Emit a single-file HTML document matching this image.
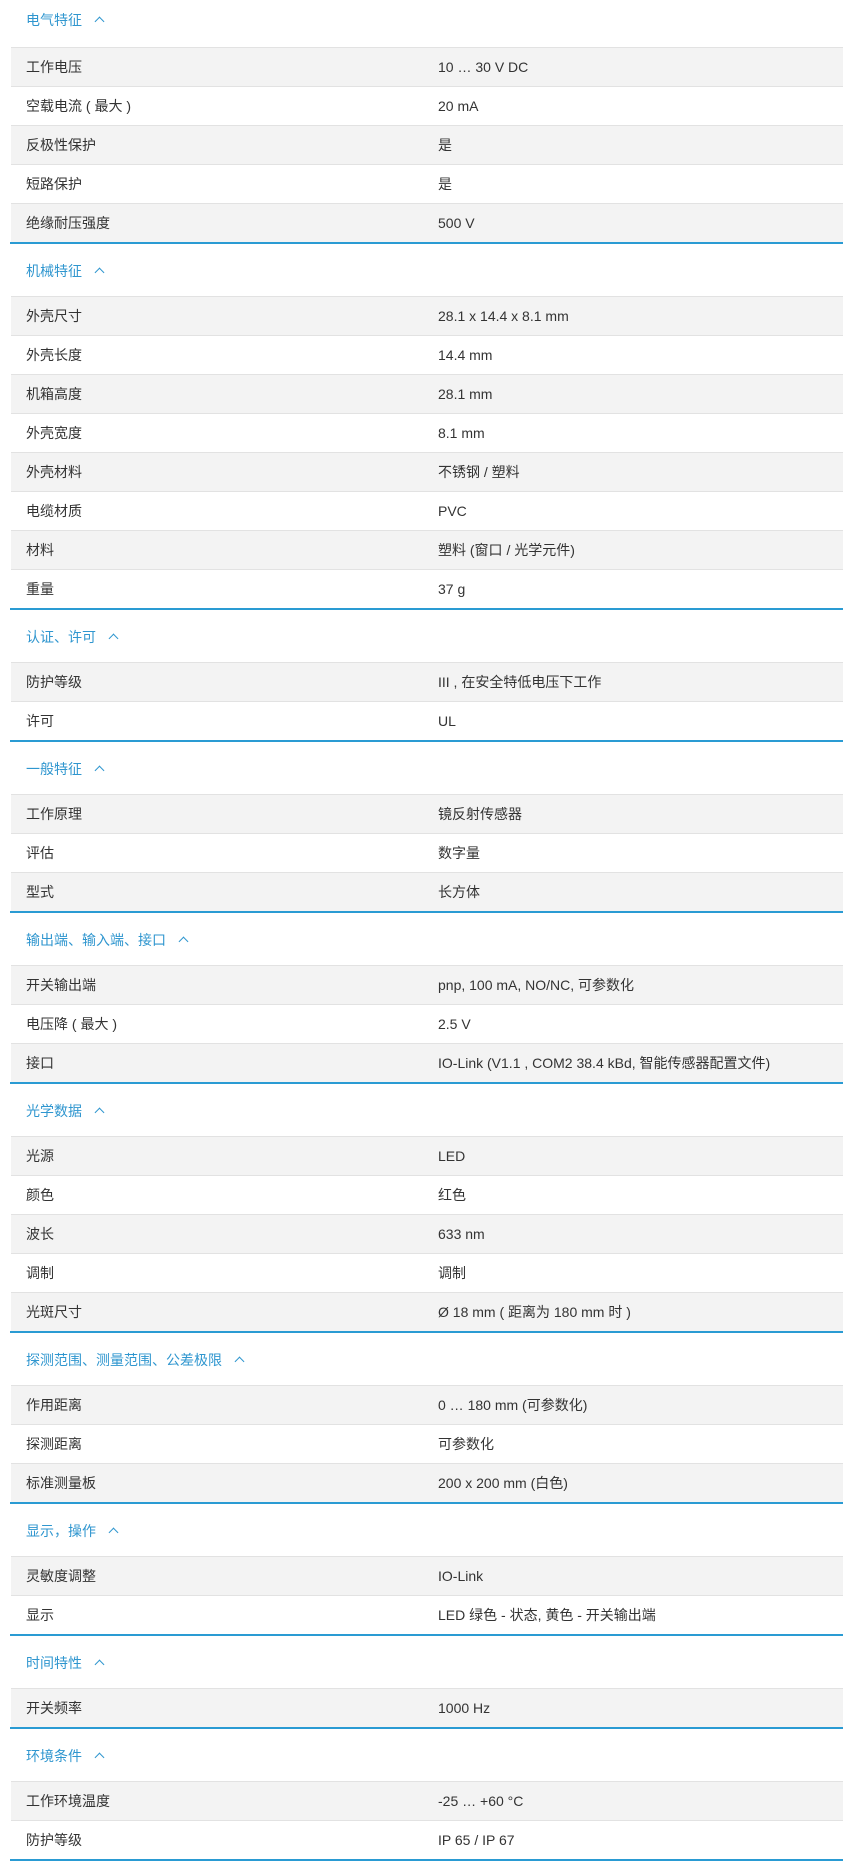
<!DOCTYPE html>
<html><head><meta charset="utf-8"><style>
*{margin:0;padding:0;box-sizing:border-box}
body{width:843px;height:1875px;background:#fff;font-family:"Liberation Sans","Noto Sans CJK SC",sans-serif;font-size:14px;color:#333;overflow:hidden}
.wrap{position:absolute;left:10px;right:0;top:0}
.h{height:52px;line-height:54px;padding-left:16px;color:#2f96cf;font-size:14px}
.h.first{height:47px;line-height:41px}
.h .c{display:inline-block;margin-left:14px;width:7px;height:7px;border-left:1.3px solid #2f96cf;border-top:1.3px solid #2f96cf;transform:rotate(45deg);position:relative;top:0px}
.r{height:39px;border-top:1px solid #e2e2e2;display:flex;align-items:center;margin-left:1px}
.r span{display:block}
.r .k{width:427px;padding-left:15px}
.sec{border-bottom:2px solid #2a9bd3}
.sec .rows .r:nth-child(odd){background:#f3f3f3}
.sec .rows .r:nth-child(even){background:#fff}
</style></head><body><div class="wrap">
<div class="sec"><div class="h first">电气特征<span class="c"></span></div><div class="rows">
<div class="r"><span class="k">工作电压</span><span>10 … 30 V DC</span></div>
<div class="r"><span class="k">空载电流 ( 最大 )</span><span>20 mA</span></div>
<div class="r"><span class="k">反极性保护</span><span>是</span></div>
<div class="r"><span class="k">短路保护</span><span>是</span></div>
<div class="r"><span class="k">绝缘耐压强度</span><span>500 V</span></div></div></div>
<div class="sec"><div class="h">机械特征<span class="c"></span></div><div class="rows">
<div class="r"><span class="k">外壳尺寸</span><span>28.1 x 14.4 x 8.1 mm</span></div>
<div class="r"><span class="k">外壳长度</span><span>14.4 mm</span></div>
<div class="r"><span class="k">机箱高度</span><span>28.1 mm</span></div>
<div class="r"><span class="k">外壳宽度</span><span>8.1 mm</span></div>
<div class="r"><span class="k">外壳材料</span><span>不锈钢 / 塑料</span></div>
<div class="r"><span class="k">电缆材质</span><span>PVC</span></div>
<div class="r"><span class="k">材料</span><span>塑料 (窗口 / 光学元件)</span></div>
<div class="r"><span class="k">重量</span><span>37 g</span></div></div></div>
<div class="sec"><div class="h">认证、许可<span class="c"></span></div><div class="rows">
<div class="r"><span class="k">防护等级</span><span>III , 在安全特低电压下工作</span></div>
<div class="r"><span class="k">许可</span><span>UL</span></div></div></div>
<div class="sec"><div class="h">一般特征<span class="c"></span></div><div class="rows">
<div class="r"><span class="k">工作原理</span><span>镜反射传感器</span></div>
<div class="r"><span class="k">评估</span><span>数字量</span></div>
<div class="r"><span class="k">型式</span><span>长方体</span></div></div></div>
<div class="sec"><div class="h">输出端、输入端、接口<span class="c"></span></div><div class="rows">
<div class="r"><span class="k">开关输出端</span><span>pnp, 100 mA, NO/NC, 可参数化</span></div>
<div class="r"><span class="k">电压降 ( 最大 )</span><span>2.5 V</span></div>
<div class="r"><span class="k">接口</span><span>IO-Link (V1.1 , COM2 38.4 kBd, 智能传感器配置文件)</span></div></div></div>
<div class="sec"><div class="h">光学数据<span class="c"></span></div><div class="rows">
<div class="r"><span class="k">光源</span><span>LED</span></div>
<div class="r"><span class="k">颜色</span><span>红色</span></div>
<div class="r"><span class="k">波长</span><span>633 nm</span></div>
<div class="r"><span class="k">调制</span><span>调制</span></div>
<div class="r"><span class="k">光斑尺寸</span><span>Ø 18 mm ( 距离为 180 mm 时 )</span></div></div></div>
<div class="sec"><div class="h">探测范围、测量范围、公差极限<span class="c"></span></div><div class="rows">
<div class="r"><span class="k">作用距离</span><span>0 … 180 mm (可参数化)</span></div>
<div class="r"><span class="k">探测距离</span><span>可参数化</span></div>
<div class="r"><span class="k">标准测量板</span><span>200 x 200 mm (白色)</span></div></div></div>
<div class="sec"><div class="h">显示，操作<span class="c"></span></div><div class="rows">
<div class="r"><span class="k">灵敏度调整</span><span>IO-Link</span></div>
<div class="r"><span class="k">显示</span><span>LED 绿色 - 状态, 黄色 - 开关输出端</span></div></div></div>
<div class="sec"><div class="h">时间特性<span class="c"></span></div><div class="rows">
<div class="r"><span class="k">开关频率</span><span>1000 Hz</span></div></div></div>
<div class="sec"><div class="h">环境条件<span class="c"></span></div><div class="rows">
<div class="r"><span class="k">工作环境温度</span><span>-25 … +60 °C</span></div>
<div class="r"><span class="k">防护等级</span><span>IP 65 / IP 67</span></div></div></div>
</div></body></html>
